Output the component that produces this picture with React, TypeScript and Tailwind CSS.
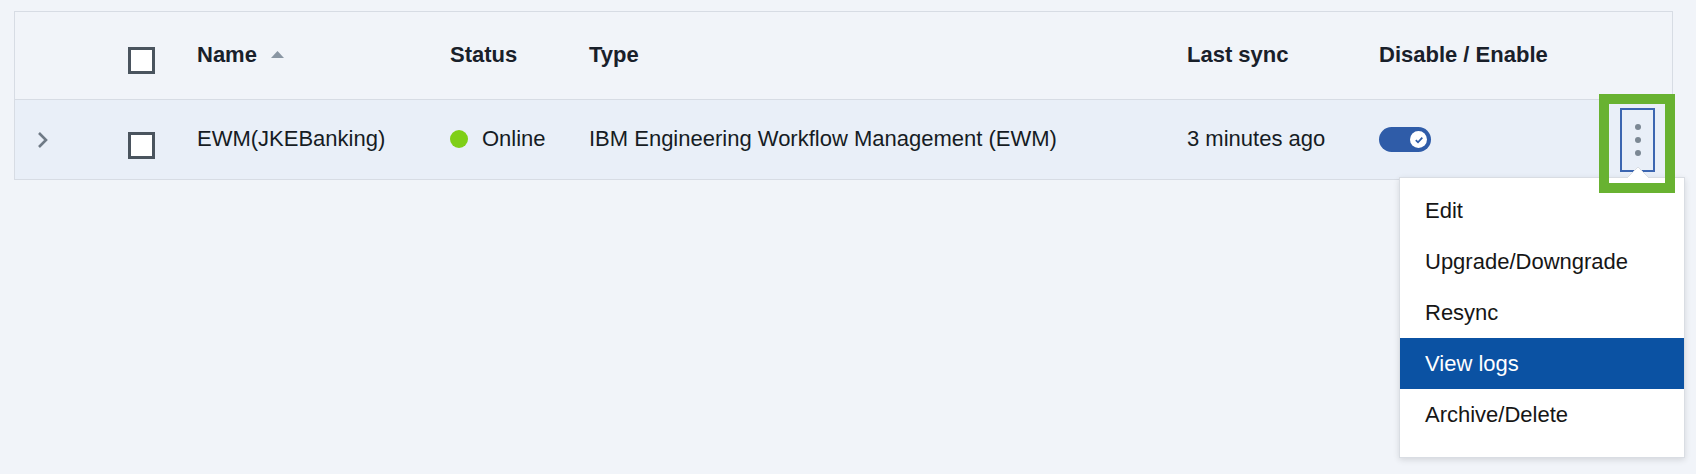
import React from 'react';

const Checkbox: React.FC = () => (
  <div className="w-[27px] h-[27px] border-[3px] border-[#4a545e] bg-white" />
);

const menuItems = ['Edit', 'Upgrade/Downgrade', 'Resync', 'View logs', 'Archive/Delete'];

const App: React.FC = () => {
  return (
    <div className="relative min-h-screen h-[474px] bg-[#f1f4f9] pt-[11px] pl-[14px] font-['Liberation_Sans',Arial,sans-serif] text-[22px] text-[#161c24]">
      <div className="w-[1659px] border border-[#d7dce4]">
        {/* header */}
        <div className="flex items-center h-[88px] border-b border-[#d7dce4] font-bold text-[#19202a]">
          <div className="w-[113px]" />
          <div className="w-[69px] pt-[10px]">
            <Checkbox />
          </div>
          <div className="w-[253px] flex items-center pb-[2px]">
            <span>Name</span>
            <svg width="13" height="7" viewBox="0 0 13 7" className="ml-[14px]">
              <path d="M0 7 L6.5 0 L13 7 Z" fill="#8a96a3" />
            </svg>
          </div>
          <div className="w-[139px] pb-[2px]">Status</div>
          <div className="w-[598px] pb-[2px]">Type</div>
          <div className="w-[192px] pb-[2px]">Last sync</div>
          <div className="flex-1 pb-[2px]">Disable / Enable</div>
        </div>
        {/* row */}
        <div className="flex items-center h-[79px] bg-[#e9eff8]">
          <div className="w-[113px] pl-[22px]">
            <svg width="12" height="18" viewBox="0 0 12 18">
              <path d="M2 2 L9 9 L2 16" fill="none" stroke="#6f7a86" strokeWidth="2.6" />
            </svg>
          </div>
          <div className="w-[69px] pt-[11px]">
            <Checkbox />
          </div>
          <div className="w-[253px] pb-[2px]">EWM(JKEBanking)</div>
          <div className="w-[139px] flex items-center gap-[14px] pb-[2px]">
            <span className="w-[18px] h-[18px] rounded-full bg-[#7fcf17]" />
            <span>Online</span>
          </div>
          <div className="w-[598px] pb-[2px]">IBM Engineering Workflow Management (EWM)</div>
          <div className="w-[192px] pb-[2px]">3 minutes ago</div>
          <div className="flex-1">
            <div className="w-[52px] h-[25px] rounded-full bg-[#2f5ca8] flex items-center justify-end pr-[4px]">
              <div className="w-[17px] h-[17px] rounded-full bg-white flex items-center justify-center">
                <svg width="10" height="10" viewBox="0 0 10 10">
                  <path d="M1.8 5.2 L4 7.3 L8.3 2.6" fill="none" stroke="#2f5ca8" strokeWidth="1.8" />
                </svg>
              </div>
            </div>
          </div>
          <div className="w-[35px] h-[64px] mr-[17px] border-2 border-[#3c66b1] flex flex-col items-center justify-center gap-[7px]">
            <span className="w-[6px] h-[6px] rounded-full bg-[#7c8894]" />
            <span className="w-[6px] h-[6px] rounded-full bg-[#7c8894]" />
            <span className="w-[6px] h-[6px] rounded-full bg-[#7c8894]" />
          </div>
        </div>
      </div>

      {/* overflow menu */}
      <div className="absolute left-[1399px] top-[177px] w-[286px] bg-white border border-[#d9dde3] shadow-[0_2px_6px_rgba(0,0,0,0.12)] pt-[7px] pb-[17px] text-[#161616]">
        {menuItems.map((item) => (
          <div
            key={item}
            className={
              item === 'View logs'
                ? 'h-[51px] flex items-center pl-[25px] bg-[#0b52a3] text-white'
                : 'h-[51px] flex items-center pl-[25px]'
            }
          >
            {item}
          </div>
        ))}
      </div>
      <svg className="absolute left-[1627px] top-[166px]" width="22" height="12" viewBox="0 0 22 12">
        <path d="M0 12 L11 1 L22 12" fill="white" stroke="#d9dde3" strokeWidth="1" />
        <rect x="1" y="11" width="20" height="2" fill="white" />
      </svg>

      {/* highlight frame */}
      <div className="absolute left-[1599px] top-[94px] w-[76px] h-[99px] border-[10px] border-[#68b231]" />
    </div>
  );
};

export default App;
